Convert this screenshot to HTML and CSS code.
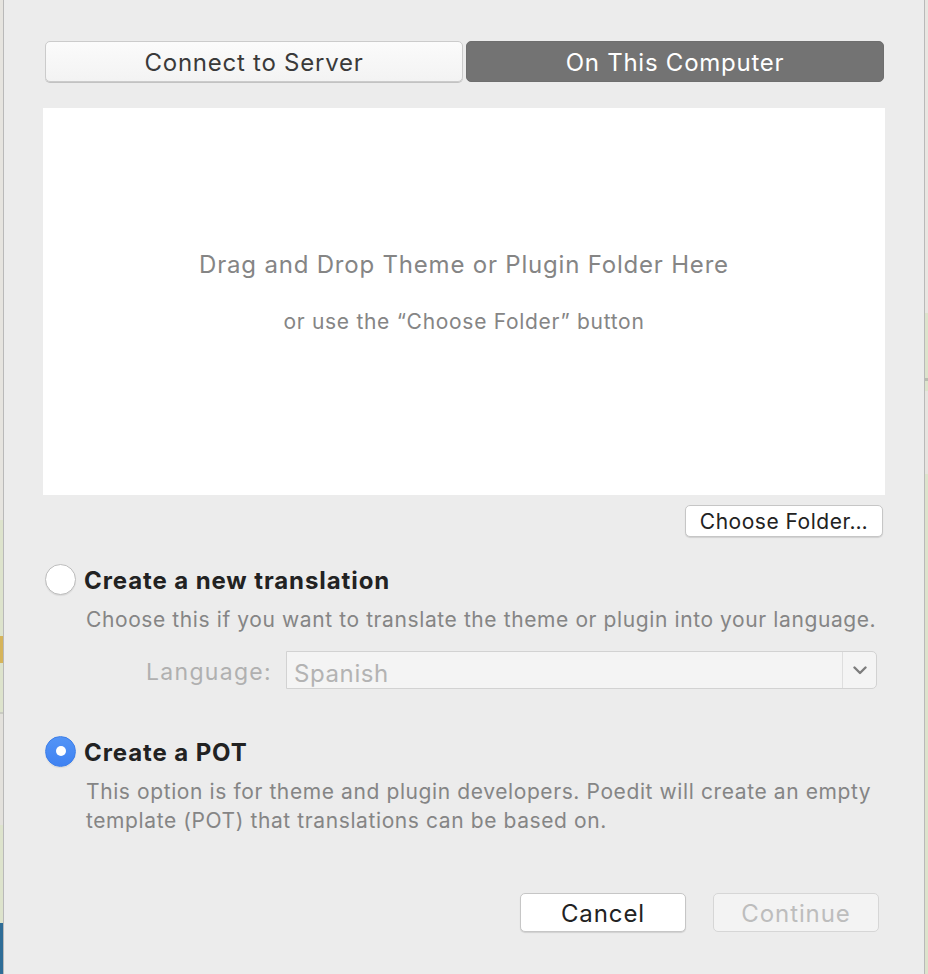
FILE: index.html
```html
<!DOCTYPE html>
<html>
<head>
<meta charset="utf-8">
<link rel="stylesheet" href="styles.css">
</head>
<body>
<div class="screen">
  <div class="strip strip-left"></div>
  <div class="dialog">
    <div class="segmented">
      <div class="seg">Connect to Server</div>
      <div class="seg seg-on">On This Computer</div>
    </div>
    <div class="dropzone">
      <div class="drop-title">Drag and Drop Theme or Plugin Folder Here</div>
      <div class="drop-sub">or use the “Choose Folder” button</div>
    </div>
    <div class="folder-row">
      <div class="btn btn-folder">Choose Folder…</div>
    </div>
    <div class="radio-row first">
      <span class="radio"></span>
      <span class="radio-label">Create a new translation</span>
    </div>
    <div class="desc one">Choose this if you want to translate the theme or plugin into your language.</div>
    <div class="lang-row">
      <span class="lang-label">Language:</span>
      <div class="select">
        <span class="select-value">Spanish</span>
        <span class="select-arrow">
          <svg width="14" height="9" viewBox="0 0 14 9"><path d="M1.5 1.5 L7 7 L12.5 1.5" fill="none" stroke="#7d7d7d" stroke-width="2.4" stroke-linecap="round" stroke-linejoin="round"/></svg>
        </span>
      </div>
    </div>
    <div class="radio-row second">
      <span class="radio radio-on"><span class="dot"></span></span>
      <span class="radio-label">Create a POT</span>
    </div>
    <div class="desc two">This option is for theme and plugin developers. Poedit will create an empty template (POT) that translations can be based on.</div>
    <div class="actions">
      <div class="btn btn-action">Cancel</div>
      <div class="btn btn-action btn-disabled">Continue</div>
    </div>
  </div>
  <div class="strip strip-right"></div>
</div>
</body>
</html>
```

FILE: styles.css
```css
* { box-sizing: border-box; }
html, body { margin: 0; padding: 0; }
body {
  width: 928px;
  height: 974px;
  overflow: hidden;
  font-family: Inter, "Liberation Sans", sans-serif;
  background: #ececec;
}
.screen {
  display: flex;
  height: 974px;
}
.strip {
  width: 3px;
  flex: none;
}
.strip-left {
  background: linear-gradient(to bottom,
    #e6e4df 0, #e6e4df 520px,
    #dde3cc 520px, #dde3cc 636px,
    #d6b45a 636px, #d6b45a 663px,
    #dde3cc 663px, #dde3cc 712px,
    #c9cbc2 712px, #c9cbc2 714px,
    #e3e1dc 714px, #e3e1dc 825px,
    #dde3cc 825px, #dde3cc 923px,
    #2f6d97 923px, #2f6d97 974px);
}
.strip-right {
  background: linear-gradient(to bottom,
    #e8e6e1 0, #e8e6e1 313px,
    #dce3cc 313px, #dce3cc 378px,
    #b8bdb0 378px, #b8bdb0 381px,
    #dce3cc 381px, #dce3cc 391px,
    #e6e4df 391px, #e6e4df 474px,
    #dce3cc 474px, #dce3cc 974px);
}
.dialog {
  flex: 1;
  border-left: 1px solid #b9b9b9;
  border-right: 1px solid #b9b9b9;
  background: #ececec;
  padding: 41px 40px 0 40px;
  display: flex;
  flex-direction: column;
}
.segmented {
  display: flex;
  gap: 3px;
  height: 41px;
  padding-left: 1px;
}
.seg {
  flex: 1;
  border-radius: 5px;
  display: flex;
  align-items: center;
  justify-content: center;
  font-size: 24px;
  letter-spacing: 0.75px;
  color: #3a3a3a;
  background: linear-gradient(#fbfbfb, #f3f3f3);
  border: 1px solid #cbcbcb;
  box-shadow: 0 1px 0 #c2c2c2;
  padding-top: 2px;
}
.seg-on {
  background: #737373;
  border-color: #6e6e6e;
  color: #ffffff;
  box-shadow: none;
}
.dropzone {
  margin: 26px -1px 0;
  height: 387px;
  background: #ffffff;
  display: flex;
  flex-direction: column;
  align-items: center;
  padding-top: 142px;
}
.drop-title {
  font-size: 24px;
  letter-spacing: 0.8px;
  line-height: 30px;
  color: #858585;
}
.drop-sub {
  margin-top: 27px;
  font-size: 21px;
  letter-spacing: 0.7px;
  line-height: 30px;
  color: #858585;
}
.folder-row {
  display: flex;
  justify-content: flex-end;
  margin-top: 10px;
  padding-right: 1px;
}
.btn {
  display: flex;
  align-items: center;
  justify-content: center;
  background: #ffffff;
  border: 1px solid #c6c6c6;
  border-radius: 5px;
  box-shadow: 0 1px 1px rgba(0,0,0,0.12);
  color: #222;
}
.btn-folder {
  width: 198px;
  height: 32px;
  font-size: 21px;
  letter-spacing: 0.5px;
}
.radio-row {
  display: flex;
  align-items: center;
  height: 32px;
  padding-left: 1px;
}
.radio-row.first { margin-top: 26px; }
.radio-row.second { margin-top: 46px; }
.radio {
  width: 31px;
  height: 31px;
  border-radius: 50%;
  background: #ffffff;
  border: 1px solid #bdbdbd;
  box-shadow: 0 1px 1px rgba(0,0,0,0.08);
  display: flex;
  align-items: center;
  justify-content: center;
  flex: none;
}
.radio-on {
  background: linear-gradient(#5394f6, #3f82f2);
  border-color: #3e7fe8;
}
.dot {
  width: 10px;
  height: 10px;
  border-radius: 50%;
  background: #ffffff;
}
.radio-label {
  margin-left: 8px;
  font-size: 24px;
  letter-spacing: 0.9px;
  font-weight: 700;
  color: #222222;
  padding-top: 2px;
}
.desc {
  padding-left: 42px;
  font-size: 21px;
  letter-spacing: 0.6px;
  color: #858585;
}
.desc.one {
  margin-top: 11px;
  line-height: 28px;
}
.desc.two {
  margin-top: 10px;
  line-height: 29px;
  padding-right: 0;
}
.lang-row {
  display: flex;
  align-items: center;
  margin-top: 17px;
  padding-left: 102px;
  padding-right: 7px;
  height: 38px;
}
.lang-label {
  font-size: 23px;
  letter-spacing: 1.3px;
  color: #b0b0b0;
  width: 140px;
  padding-top: 4px;
}
.select {
  flex: 1;
  height: 38px;
  display: flex;
  background: #f4f4f4;
  border: 1px solid #d2d2d2;
  border-radius: 0 5px 5px 0;
}
.select-value {
  flex: 1;
  display: flex;
  align-items: center;
  padding-left: 7px;
  padding-top: 6px;
  font-size: 24px;
  letter-spacing: 0.6px;
  color: #b3b3b3;
}
.select-arrow {
  width: 34px;
  border-left: 1px solid #dedede;
  display: flex;
  align-items: center;
  justify-content: center;
}
.actions {
  display: flex;
  justify-content: flex-end;
  gap: 27px;
  margin-top: 58px;
  padding-right: 5px;
}
.btn-action {
  width: 166px;
  height: 39px;
  font-size: 24px;
  letter-spacing: 0.9px;
  padding-top: 2px;
}
.btn-disabled {
  background: #f3f3f3;
  border-color: #d6d6d6;
  box-shadow: none;
  color: #bdbdbd;
}
```
